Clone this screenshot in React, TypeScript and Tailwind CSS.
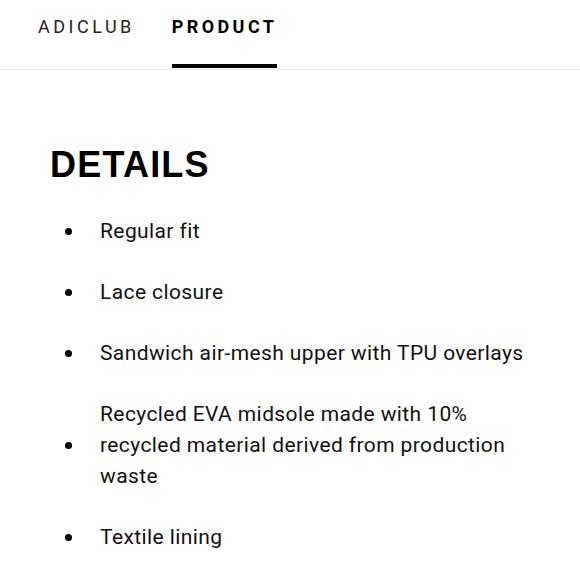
const items = [
  'Regular fit',
  'Lace closure',
  'Sandwich air-mesh upper with TPU overlays',
  'Recycled EVA midsole made with 10% recycled material derived from production waste',
  'Textile lining',
];

export default function App() {
  return (
    <div className="w-[580px] h-[580px] bg-white overflow-hidden text-black font-['Roboto',sans-serif]">
      <div className="flex gap-[37px] pl-[38px] h-[70px] border-b border-[#e6e6e6]">
        <div className="flex flex-col justify-between pt-[15px]">
          <span className="text-[18px] leading-[24px] tracking-[3.5px] text-[#222]">ADICLUB</span>
        </div>
        <div className="flex flex-col justify-between pt-[15px]">
          <span className="text-[18px] leading-[24px] tracking-[3.4px] font-bold">PRODUCT</span>
          <div className="h-[4px] bg-black mb-[1px]" />
        </div>
      </div>

      <div className="pl-[50px] pr-[40px]">
        <h2 className="mt-[77px] text-[36px] leading-[36px] font-bold tracking-[1.2px] font-['Liberation_Sans',sans-serif]">
          DETAILS
        </h2>
        <ul className="mt-[33px] flex flex-col gap-[30px]">
          {items.map((item) => (
            <li key={item} className="flex items-center">
              <span className="w-[7px] h-[7px] rounded-full bg-black ml-[15px] mr-[28px] shrink-0" />
              <span className="text-[21px] leading-[31px] tracking-[0.4px] text-[#111] max-w-[430px]">{item}</span>
            </li>
          ))}
        </ul>
      </div>
    </div>
  );
}
